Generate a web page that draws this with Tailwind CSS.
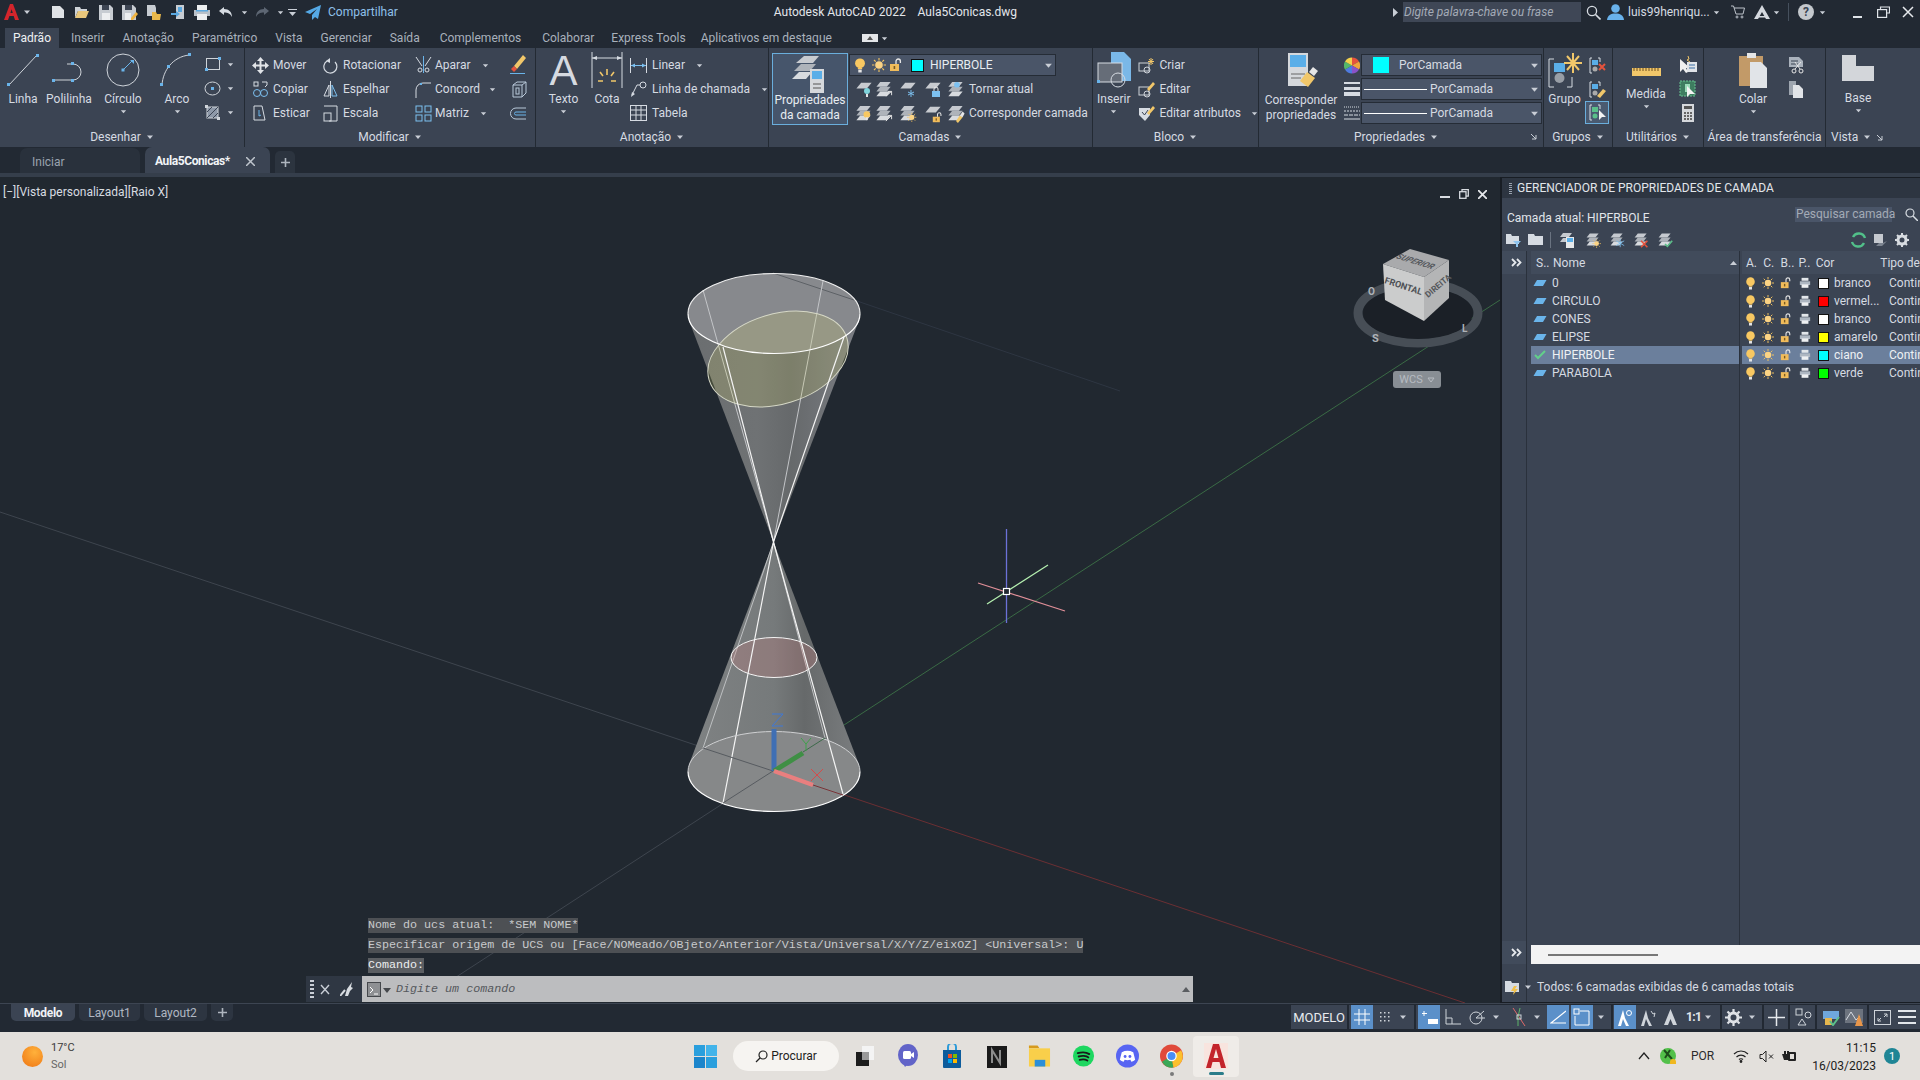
<!DOCTYPE html>
<html lang="pt-BR">
<head>
<meta charset="utf-8">
<title>Autodesk AutoCAD 2022</title>
<script src="https://cdn.jsdelivr.net/npm/@tailwindcss/browser@4"></script>
</head>
<body class="bg-[#222933]">
<svg class="absolute w-0 h-0">
  <defs>
    <symbol id="bulb" viewBox="1 0 10 14"><circle cx="6" cy="5" r="4.600" fill="#f8c862"/><rect x="4" y="9" width="4" height="1.400" fill="#f8c862"/><rect x="4.400" y="10.800" width="3.200" height="2.700" fill="#e6e6e6"/></symbol>
    <symbol id="sun" viewBox="0 0 14 14"><circle cx="7" cy="7" r="3.800" fill="#fbd384"/><path d="M7 0v2.400M7 11.600V14M0 7h2.400M11.600 7H14M2 2l1.700 1.700M10.300 10.300 12 12M2 12l1.700-1.700M10.300 3.700 12 2" stroke="#f5c45e" stroke-width="1.100"/></symbol>
    <symbol id="lock" viewBox="0 0 14 14"><rect x="1" y="6" width="9" height="7" fill="#f1bc5b"/><rect x="4.600" y="8" width="1.600" height="3" fill="#7a5a20"/><path d="M7 6V3.200a2.200 2.200 0 0 1 4.400 0V5" stroke="#e6e6e6" stroke-width="1.300" fill="none"/></symbol>
    <symbol id="printer" viewBox="0 0 14 14"><rect x="3" y="1" width="8" height="3.400" fill="#e2e6ea"/><rect x="1" y="5" width="12" height="4.400" fill="#aeb7c2"/><rect x="3" y="8.600" width="8" height="4" fill="#eef0f2"/></symbol>
    <symbol id="plane" viewBox="0 0 14 8"><path d="M4 1h9.500L10 7H.5z" fill="#6ab4ea"/></symbol>
    <symbol id="stack" viewBox="0 0 20 20"><path d="M6 2h11l-4 5H2z" fill="#c5c9cf"/><path d="M6 7h11l-4 5H2z" fill="#aeb3ba"/><path d="M6 12h11l-4 5H2z" fill="#d8dbdf"/></symbol>
    <symbol id="plate" viewBox="0 0 20 20"><path d="M7 3h11l-5 6H2z" fill="#c8cbd0"/></symbol>
    <symbol id="chev" viewBox="0 0 8 8"><path d="M1 2.500h6L4 6z" fill="#c9ced6"/></symbol>
  </defs>
</svg>

<div class="flex flex-col w-[1920px] h-[1080px] overflow-hidden whitespace-nowrap text-[12px] leading-none text-[#d6dbe2] font-['Roboto',sans-serif]">

  <!-- title bar -->
  <header class="flex items-center h-6 shrink-0 bg-[#222933]">
    <div class="flex items-center w-[46px] pl-[4px] gap-[4px]">
      <svg width="15" height="18" viewBox="0 0 15 18"><path d="M0 17 6 1h3l6 16h-4L9.700 13H5.400L4 17zM6.400 10h2.400L7.600 6.200z" fill="#d3252c"/></svg>
      <svg width="8" height="8"><use href="#chev"/></svg>
    </div>
    <span class="flex justify-center w-6"><svg width="14" height="14" viewBox="0 0 14 14"><path d="M1 1h8l4 4v8H1z" fill="#dfe2e6"/></svg></span>
    <span class="flex justify-center w-6"><svg width="16" height="14" viewBox="0 0 16 14"><path d="M1 2h5l1 2h6v2H4L1 13z" fill="#cfd3d8"/><path d="M4 6h11l-3 7H1z" fill="#e9c77c"/></svg></span>
    <span class="flex justify-center w-6"><svg width="14" height="15" viewBox="0 0 14 15"><path d="M0 0h11l3 3v12H0z" fill="#c7ccd2"/><rect x="3" y="0" width="7" height="5" fill="#3c4452"/><rect x="3" y="8" width="8" height="7" fill="#eceef0"/></svg></span>
    <span class="flex justify-center w-6"><svg width="16" height="15" viewBox="0 0 16 15"><path d="M0 0h11l3 3v12H0z" fill="#c7ccd2"/><rect x="3" y="0" width="7" height="5" fill="#3c4452"/><rect x="3" y="8" width="6" height="7" fill="#eceef0"/><path d="m9 13 5-6 2 2-5 6H9z" fill="#f0b340"/></svg></span>
    <span class="flex justify-center w-6"><svg width="16" height="15" viewBox="0 0 16 15"><path d="M1 0h8l1 3v8H1z" fill="#c7ccd2"/><path d="M6 7h4l1 2h4l-1 6H6z" fill="#e9b84c"/></svg></span>
    <span class="flex justify-center w-6"><svg width="14" height="16" viewBox="0 0 14 16"><rect x="5" y="1" width="8" height="14" fill="#c7ccd2"/><rect x="7" y="3" width="4" height="5" fill="#5aa7df"/><path d="M0 9h5V7l4 3-4 3v-2H0z" fill="#5aa7df"/></svg></span>
    <span class="flex justify-center w-6"><svg width="16" height="15" viewBox="0 0 16 15"><rect x="3" y="0" width="10" height="5" fill="#eceef0"/><rect x="0" y="5" width="16" height="6" fill="#b9c0c8"/><rect x="3" y="9" width="10" height="6" fill="#eceef0"/><rect x="2" y="5" width="12" height="1.500" fill="#5aa7df"/></svg></span>
    <span class="flex justify-center w-6"><svg width="16" height="12" viewBox="0 0 16 12"><path d="M6 1 1 5l5 4V6.500c4 0 6 1 8 4.500 0-5-3-8-8-8z" fill="#d6dbe2"/></svg></span>
    <span class="flex justify-center w-3"><svg width="7" height="7"><use href="#chev"/></svg></span>
    <span class="flex justify-center w-6"><svg width="16" height="12" viewBox="0 0 16 12"><path d="M10 1l5 4-5 4V6.500C6 6.500 4 7.500 2 11c0-5 3-8 8-8z" fill="#5d6673"/></svg></span>
    <span class="flex justify-center w-3"><svg width="7" height="7"><use href="#chev"/></svg></span>
    <span class="flex justify-center w-3"><svg width="9" height="9" viewBox="0 0 9 9"><path d="M0 1h9v1H0zM1 4h7L4.500 8z" fill="#c9ced6"/></svg></span>
    <span class="flex justify-center w-6 ml-[3px]"><svg width="16" height="15" viewBox="0 0 16 15"><path d="M16 0 0 7l5 2 7-5-5 6v5l3-3 3 2z" fill="#55a9e6"/></svg></span>
    <span class="ml-[3px] text-[#8fc0ea]">Compartilhar</span>
    <span class="ml-[376px] whitespace-pre text-[#e2e6eb]">Autodesk AutoCAD 2022    Aula5Conicas.dwg</span>

    <div class="flex items-center ml-auto h-6">
      <svg width="6" height="9" viewBox="0 0 6 9"><path d="M1 0l5 4.500L1 9z" fill="#c9ced6"/></svg>
      <div class="flex items-center ml-[5px] w-[178px] h-5 px-[1px] bg-[#3f4756] italic text-[#a4abb6]">Digite palavra-chave ou frase</div>
      <svg class="ml-[5px]" width="15" height="15" viewBox="0 0 15 15" fill="none"><circle cx="6" cy="6" r="4.600" stroke="#d8dde3" stroke-width="1.300"/><path d="m9.500 9.500 5 5" stroke="#d8dde3" stroke-width="1.600"/></svg>
      <svg class="ml-[6px]" width="17" height="16" viewBox="0 0 17 16"><circle cx="8.500" cy="4.500" r="4.300" fill="#69b2ec"/><path d="M0 16c.5-5 4-6.500 8.500-6.500S16.500 11 17 16z" fill="#69b2ec"/></svg>
      <span class="ml-[4px] w-[85px]">luis99henriqu...</span>
      <svg width="7" height="7"><use href="#chev"/></svg>
      <svg class="ml-[11px]" width="14" height="14" viewBox="0 0 14 14" fill="none" stroke="#bcc2ca"><path d="M0 1h2.500L5 9h7l1.500-6H3"/><circle cx="6" cy="12" r="1"/><circle cx="11" cy="12" r="1"/></svg>
      <svg class="ml-[9px]" width="16" height="14" viewBox="0 0 16 14"><path d="M8 0 16 14h-4L8 7l-4 7H0z" fill="#d4d8de"/><path d="M4 11h8v1.500H4z" fill="#d4d8de"/></svg>
      <svg class="ml-[3px]" width="7" height="7"><use href="#chev"/></svg>
      <span class="ml-[8px] w-px h-[18px] bg-[#46505d]"></span>
      <span class="flex items-center justify-center ml-[9px] w-4 h-4 rounded-full bg-[#c4c8cd] text-[#3b4453] font-bold text-[12px]">?</span>
      <svg class="ml-[5px]" width="7" height="7"><use href="#chev"/></svg>
      <span class="ml-[27px] w-[9px] h-[2px] mt-[9px] bg-[#dfe3e8]"></span>
      <svg class="ml-[15px]" width="13" height="12" viewBox="0 0 13 12" fill="none" stroke="#dfe3e8" stroke-width="1.200"><path d="M3.500 3V1h9v6h-3"/><rect x=".6" y="3.600" width="9" height="7.800"/></svg>
      <svg class="ml-[12px] mr-[6px]" width="12" height="12" viewBox="0 0 12 12" stroke="#e6e9ed" stroke-width="1.500"><path d="m1 1 10 10M11 1 1 11"/></svg>
    </div>
  </header>

  <!-- ribbon tabs -->
  <nav class="flex items-end h-6 shrink-0 pl-[5px] bg-[#222933] text-[#a9b1bc]">
    <span class="flex items-center justify-center w-[54px] h-5 bg-[#3b4453] text-[#eef1f4] ">Padrão</span>
    <span class="flex items-center h-5 ml-[3px] px-[9px]">Inserir</span>
    <span class="flex items-center h-5 px-[9px]">Anotação</span>
    <span class="flex items-center h-5 px-[9px]">Paramétrico</span>
    <span class="flex items-center h-5 px-[9px]">Vista</span>
    <span class="flex items-center h-5 px-[9px]">Gerenciar</span>
    <span class="flex items-center h-5 px-[9px]">Saída</span>
    <span class="flex items-center h-5 ml-[2px] px-[9px]">Complementos</span>
    <span class="flex items-center h-5 ml-[3px] px-[9px]">Colaborar</span>
    <span class="flex items-center h-5 -ml-[1px] px-[9px]">Express Tools</span>
    <span class="flex items-center h-5 -ml-[3px] px-[9px]">Aplicativos em destaque</span>
    <span class="flex items-center h-5 ml-[21px]"><span class="flex items-center justify-center w-[16px] h-[8px] bg-[#e4e6e9]"><svg width="6" height="4" viewBox="0 0 6 4"><path d="M0 4 3 0l3 4z" fill="#555"/></svg></span><svg class="ml-[3px]" width="7" height="7"><use href="#chev"/></svg></span>
  </nav>

  <!-- ribbon -->
  <section class="flex h-[99px] shrink-0 bg-[#3b4453]">

    <!-- Desenhar -->
    <div class="flex flex-col w-[245px] border-r border-[#232a33]">
      <div class="flex h-[79px] pt-[4px]">
        <div class="flex flex-col items-center w-[46px]">
          <svg width="34" height="36" viewBox="0 0 34 36" fill="none"><path d="M3 33 31 3" stroke="#cfd4da" stroke-width="1"/><rect x="1" y="31" width="3" height="3" fill="#6ab4ea"/><rect x="30" y="2" width="3" height="3" fill="#6ab4ea"/></svg>
          <span class="mt-[5px]">Linha</span>
        </div>
        <div class="flex flex-col items-center w-[46px]">
          <svg width="36" height="36" viewBox="0 0 36 36" fill="none"><path d="M2 28h20a8 8 0 0 0 0-16h-6" stroke="#cfd4da"/><rect x="1" y="27" width="3" height="3" fill="#6ab4ea"/><rect x="20" y="27" width="3" height="3" fill="#6ab4ea"/><rect x="20" y="10" width="3" height="3" fill="#6ab4ea"/></svg>
          <span class="mt-[5px]">Polilinha</span>
        </div>
        <div class="flex flex-col items-center w-[62px]">
          <svg width="36" height="36" viewBox="0 0 36 36" fill="none"><circle cx="18" cy="18" r="16" stroke="#cfd4da"/><path d="M18 18l9-9" stroke="#6ab4ea"/><rect x="16.500" y="16.500" width="3" height="3" fill="#6ab4ea"/><path d="M25 8h4v4z" fill="#6ab4ea"/></svg>
          <span class="mt-[5px]">Círculo</span>
          <svg class="mt-[3px]" width="7" height="7"><use href="#chev"/></svg>
        </div>
        <div class="flex flex-col items-center w-[46px]">
          <svg width="36" height="36" viewBox="0 0 36 36" fill="none"><path d="M3 33C4 18 14 5 30 3" stroke="#cfd4da"/><rect x="1" y="31" width="3" height="3" fill="#6ab4ea"/><rect x="8" y="13" width="3" height="3" fill="#6ab4ea"/><rect x="29" y="1" width="3" height="3" fill="#6ab4ea"/></svg>
          <span class="mt-[5px]">Arco</span>
          <svg class="mt-[3px]" width="7" height="7"><use href="#chev"/></svg>
        </div>
        <div class="flex flex-col w-[44px]">
          <div class="flex items-center h-6 pl-[4px] gap-[6px]"><svg width="17" height="15" viewBox="0 0 17 15" fill="none" stroke="#cfd4da"><rect x="2.500" y="1.500" width="13" height="11"/><rect x="1" y="11" width="3" height="3" fill="#6ab4ea" stroke="none"/><rect x="14" y="0" width="3" height="3" fill="#6ab4ea" stroke="none"/></svg><svg width="7" height="7"><use href="#chev"/></svg></div>
          <div class="flex items-center h-6 pl-[4px] gap-[6px]"><svg width="17" height="15" viewBox="0 0 17 15" fill="none"><ellipse cx="8.500" cy="7.500" rx="7.500" ry="6.500" stroke="#cfd4da"/><rect x="7" y="6" width="3" height="3" fill="#6ab4ea"/></svg><svg width="7" height="7"><use href="#chev"/></svg></div>
          <div class="flex items-center h-6 pl-[4px] gap-[6px]"><svg width="17" height="17" viewBox="0 0 17 17" fill="none"><rect x="3" y="3" width="11" height="11" fill="#8d98a8" stroke="#cfd4da"/><path d="M3 8 8 3M3 14 14 3M9 14l5-5" stroke="#3b4453"/><rect x="1" y="1" width="3" height="3" fill="#cfd4da"/><rect x="13" y="13" width="3" height="3" fill="#cfd4da"/></svg><svg width="7" height="7"><use href="#chev"/></svg></div>
        </div>
      </div>
      <div class="flex items-center justify-center gap-[5px] h-5">Desenhar <svg width="8" height="8"><use href="#chev"/></svg></div>
    </div>

    <!-- Modificar -->
    <div class="flex flex-col w-[291px] border-r border-[#232a33]">
      <div class="flex h-[79px] pt-[5px] pl-[7px]">
        <div class="flex flex-col w-[71px]">
          <div class="flex items-center h-6 gap-[4px]"><svg width="17" height="17" viewBox="0 0 17 17"><path d="M8.500 0 12 4H9.500v3.500H13V5l4 3.500L13 12V9.500H9.500V13H12l-3.500 4L5 13h2.500V9.500H4V12L0 8.500 4 5v2.500h3.500V4H5z" fill="#e1e4e8"/></svg>Mover</div>
          <div class="flex items-center h-6 gap-[4px]"><svg width="17" height="17" viewBox="0 0 17 17" fill="none" stroke="#7cc0f0"><rect x="2" y="1" width="4" height="4" stroke="#d6dbe2"/><path d="M10 1h5v3l-2 2" stroke="#d6dbe2"/><circle cx="5" cy="12" r="3.500"/><circle cx="12" cy="12" r="3.500"/></svg>Copiar</div>
          <div class="flex items-center h-6 gap-[4px]"><svg width="17" height="17" viewBox="0 0 17 17" fill="none" stroke="#d6dbe2"><path d="M2 1h8l3 14H2z"/><path d="M7 5v6l2-1" stroke="#6ab4ea"/></svg>Esticar</div>
        </div>
        <div class="flex flex-col w-[92px]">
          <div class="flex items-center h-6 gap-[5px]"><svg width="15" height="17" viewBox="0 0 15 17" fill="none" stroke="#d6dbe2" stroke-width="1.200"><path d="M12 5a6.500 6.500 0 1 1-8-1"/><path d="M7 1v5L3 4z" fill="#d6dbe2" stroke="none"/></svg>Rotacionar</div>
          <div class="flex items-center h-6 gap-[5px]"><svg width="15" height="17" viewBox="0 0 15 17" fill="none" stroke="#d6dbe2"><path d="M7.500 0v17"/><path d="M6 4 1 15h5z" /><path d="M9 4l5 11H9z" stroke="#7cc0f0"/></svg>Espelhar</div>
          <div class="flex items-center h-6 gap-[5px]"><svg width="15" height="17" viewBox="0 0 15 17" fill="none" stroke="#d6dbe2"><path d="M1 1h13v15H6"/><rect x="1" y="8" width="7" height="8"/></svg>Escala</div>
        </div>
        <div class="flex flex-col w-[94px]">
          <div class="flex items-center h-6 gap-[3px]"><svg width="17" height="18" viewBox="0 0 17 18" fill="none" stroke="#d6dbe2"><path d="M8.500 0v17" stroke="#6ab4ea"/><path d="M1 1l6 9M16 1l-6 9"/><circle cx="5" cy="14" r="2"/><circle cx="12" cy="14" r="2"/></svg>Aparar<svg class="ml-[8px]" width="7" height="7"><use href="#chev"/></svg></div>
          <div class="flex items-center h-6 gap-[3px]"><svg width="17" height="17" viewBox="0 0 17 17" fill="none" stroke="#d6dbe2"><path d="M1 17V9a7 7 0 0 1 7-7h8"/><rect x="5" y="2" width="2" height="2" fill="#6ab4ea" stroke="none"/></svg>Concord<svg class="ml-[6px]" width="7" height="7"><use href="#chev"/></svg></div>
          <div class="flex items-center h-6 gap-[3px]"><svg width="17" height="17" viewBox="0 0 17 17" fill="none" stroke="#7cc0f0"><rect x="1" y="1" width="6" height="6"/><rect x="10" y="1" width="6" height="6"/><rect x="1" y="10" width="6" height="6"/><rect x="10" y="10" width="6" height="6"/></svg>Matriz<svg class="ml-[8px]" width="7" height="7"><use href="#chev"/></svg></div>
        </div>
        <div class="flex flex-col w-[18px]">
          <div class="flex items-center h-6"><svg width="18" height="20" viewBox="0 0 18 20"><path d="m5 11 9-11 3 3-9 11z" fill="#f1c76a"/><path d="m2 14 3-3 3 3-3 3z" fill="#e5533d"/><path d="M1 18h15v1H1z" fill="#6ab4ea"/></svg></div>
          <div class="flex items-center h-6"><svg width="18" height="17" viewBox="0 0 18 17" fill="none" stroke="#b9c9da"><path d="M4 4 8 1h9v11l-4 4H4z"/><path d="M4 4h9v12M13 4l4-3"/><rect x="7" y="7" width="3" height="6"/></svg></div>
          <div class="flex items-center h-6"><svg width="18" height="15" viewBox="0 0 18 15" fill="none" stroke="#b9c9da"><path d="M17 2H7a5.500 5.500 0 0 0 0 11h10"/><path d="M17 6H7a1.500 1.500 0 0 0 0 3h10" stroke="#6ab4ea"/></svg></div>
        </div>
      </div>
      <div class="flex items-center justify-center gap-[5px] h-5">Modificar <svg width="8" height="8"><use href="#chev"/></svg></div>
    </div>

    <!-- Anotação -->
    <div class="flex flex-col w-[233px] border-r border-[#232a33]">
      <div class="flex h-[79px] pt-[4px]">
        <div class="flex flex-col items-center w-[56px]">
          <span class="h-[36px] text-[42px] leading-[38px] text-[#d6dae0] font-['Liberation_Sans',sans-serif]">A</span>
          <span class="mt-[5px]">Texto</span>
          <svg class="mt-[3px]" width="7" height="7"><use href="#chev"/></svg>
        </div>
        <div class="flex flex-col items-center w-[32px]">
          <svg width="32" height="36" viewBox="0 0 32 36" fill="none"><path d="M1 0v36M31 0v36" stroke="#d6dbe2"/><path d="M1 6h30" stroke="#d6dbe2"/><path d="M1 6l5-2v4zM31 6l-5-2v4z" fill="#d6dbe2"/><path d="M16 17v6M9 20l3 4M23 20l-3 4M7 29h5M20 29h5" stroke="#f1c76a" stroke-width="1.600"/></svg>
          <span class="mt-[5px]">Cota</span>
        </div>
        <div class="flex flex-col ml-[7px] pt-[1px]">
          <div class="flex items-center h-6 gap-[5px]"><svg width="17" height="17" viewBox="0 0 17 17" fill="none" stroke="#d6dbe2"><path d="M.5 1v15M16.500 1v15"/><path d="M1 8.500h15" stroke="#7cc0f0"/><path d="M1 8.500l4-2v4zM16 8.500l-4-2v4z" fill="#7cc0f0" stroke="none"/></svg>Linear<svg class="ml-[6px]" width="7" height="7"><use href="#chev"/></svg></div>
          <div class="flex items-center h-6 gap-[5px]"><svg width="17" height="17" viewBox="0 0 17 17" fill="none" stroke="#d6dbe2"><circle cx="13" cy="4" r="3"/><path d="M10 4H7L2 14"/><path d="m1 16 1-5 3 2z" fill="#d6dbe2" stroke="none"/></svg>Linha de chamada<svg class="ml-[6px]" width="7" height="7"><use href="#chev"/></svg></div>
          <div class="flex items-center h-6 gap-[5px]"><svg width="17" height="16" viewBox="0 0 17 16" fill="none" stroke="#d6dbe2"><rect x=".5" y=".5" width="16" height="15"/><path d="M.5 5h16M.5 10h16M6 .5v15M11 .5v15"/></svg>Tabela</div>
        </div>
      </div>
      <div class="flex items-center justify-center gap-[5px] h-5">Anotação <svg width="8" height="8"><use href="#chev"/></svg></div>
    </div>

    <!-- Camadas -->
    <div class="flex flex-col w-[324px] border-r border-[#232a33]">
      <div class="flex h-[79px] pt-[5px] pl-[3px]">
        <div class="flex flex-col items-center w-[76px] h-[72px] border border-[#6aaedc] bg-[#46556b] pt-[1px]">
          <svg width="44" height="38" viewBox="0 0 44 38"><path d="M16 1h15l-6 7H8z" fill="#c8cbd0"/><path d="M13 9h15l-6 7H6z" fill="#aeb3ba"/><path d="M11 17h13l-6 7H4z" fill="#d8dbdf"/><rect x="22" y="14" width="14" height="24" fill="#d5d8dc"/><rect x="24" y="16" width="10" height="8" fill="#5aaee8"/><path d="M25 29h8M25 33h8" stroke="#555"/></svg>
          <span class="leading-[15px] text-center text-[#e8edf2]">Propriedades<br>da camada</span>
        </div>
        <div class="flex flex-col ml-[1px] w-[240px]">
          <div class="flex items-center w-[207px] h-[22px] mt-px border border-[#252c36] bg-[#4a5568] pl-[4px]">
            <svg width="12" height="15"><use href="#bulb"/></svg>
            <svg class="ml-[6px]" width="14" height="14"><use href="#sun"/></svg>
            <svg class="ml-[3px]" width="14" height="14"><use href="#lock"/></svg>
            <span class="ml-[8px] shrink-0 w-[13px] h-[13px] bg-[#00ffff] border border-[#111]"></span>
            <span class="ml-[6px] text-[#e8edf2]">HIPERBOLE</span>
            <svg class="ml-auto mr-[2px]" width="9" height="9"><use href="#chev"/></svg>
          </div>
          <div class="flex items-center h-6 mt-px pl-[5px]">
            <svg width="20" height="19" viewBox="0 0 20 19"><use href="#plate"/><circle cx="13" cy="11" r="3" fill="#7fd4dc"/><rect x="12" y="14" width="2" height="3" fill="#e6e6e6"/></svg>
            <svg width="20" height="19" viewBox="0 0 20 20"><use href="#stack"/><path d="m12 17 6-5M18 12v4M18 12h-4" stroke="#e6e6e6"/></svg>
            <svg class="ml-[4px]" width="20" height="19" viewBox="0 0 20 19"><use href="#plate"/><path d="M13 10v7M10 12l6 3M10 15l6-3" stroke="#7cc0f0"/></svg>
            <svg class="ml-[5px]" width="20" height="19" viewBox="0 0 20 19"><use href="#plate"/><rect x="9" y="11" width="8" height="6" fill="#7cc0f0"/><path d="M11 11V9a2 2 0 0 1 4 0v2" stroke="#e6e6e6" fill="none"/></svg>
            <svg class="ml-[3px]" width="20" height="19" viewBox="0 0 20 20"><use href="#stack"/><circle cx="11" cy="5" r="3" fill="#7cc0f0"/></svg>
            <span class="ml-[3px]">Tornar atual</span>
          </div>
          <div class="flex items-center h-6 pl-[5px]">
            <svg width="20" height="19" viewBox="0 0 20 20"><use href="#stack"/><circle cx="13" cy="11" r="3.500" fill="#f8c862"/><rect x="12" y="14" width="2" height="3" fill="#e6e6e6"/></svg>
            <svg width="20" height="19" viewBox="0 0 20 20"><use href="#stack"/><path d="m12 18 6-6M18 12v4M18 12h-4" stroke="#e6e6e6"/></svg>
            <svg class="ml-[4px]" width="20" height="19" viewBox="0 0 20 20"><use href="#stack"/><use href="#sun" x="9" y="9" width="10" height="10"/></svg>
            <svg class="ml-[5px]" width="20" height="19" viewBox="0 0 20 19"><use href="#plate"/><use href="#lock" x="9" y="8" width="11" height="11"/></svg>
            <svg class="ml-[3px]" width="20" height="19" viewBox="0 0 20 20"><use href="#stack"/><path d="m10 18 4-6 3 2-5 6z" fill="#f1c76a"/><path d="m14 12 3-4 2 2-2 4z" fill="#e6e6e6"/></svg>
            <span class="ml-[3px]">Corresponder camada</span>
          </div>
        </div>
      </div>
      <div class="flex items-center justify-center gap-[5px] h-5">Camadas <svg width="8" height="8"><use href="#chev"/></svg></div>
    </div>

    <!-- Bloco -->
    <div class="flex flex-col w-[166px] border-r border-[#232a33]">
      <div class="flex h-[79px] pt-[4px]">
        <div class="flex flex-col items-center w-[44px]">
          <svg width="34" height="36" viewBox="0 0 34 36"><path d="M14 0h13l7 7v22H14z" fill="#7ab8e8"/><rect x="1" y="11" width="24" height="19" fill="#666d78" stroke="#d6dbe2"/><circle cx="21" cy="28" r="7" fill="none" stroke="#d6dbe2"/><rect x="0" y="28" width="3" height="3" fill="#6ab4ea"/></svg>
          <span class="mt-[5px]">Inserir</span>
          <svg class="mt-[3px]" width="7" height="7"><use href="#chev"/></svg>
        </div>
        <div class="flex flex-col pt-[1px] pl-[4px]">
          <div class="flex items-center h-6 gap-[4px]"><svg width="17" height="17" viewBox="0 0 17 17" fill="none" stroke="#cfd4da"><rect x="1" y="6" width="10" height="8"/><circle cx="9" cy="13" r="3"/><path d="M13 1v7M10 4.500h6M11 2l4 5M15 2l-4 5" stroke="#f1c76a"/></svg>Criar</div>
          <div class="flex items-center h-6 gap-[4px]"><svg width="17" height="17" viewBox="0 0 17 17" fill="none" stroke="#cfd4da"><rect x="1" y="6" width="10" height="8"/><circle cx="9" cy="13" r="3"/><path d="m9 8 6-7 2 2-6 7z" fill="#f1c76a" stroke="none"/></svg>Editar</div>
          <div class="flex items-center h-6 gap-[4px]"><svg width="17" height="17" viewBox="0 0 17 17"><path d="M1 3h11v7l-5 6-6-6z" fill="#d6dbe2"/><path d="M4 7l2.500 3L10 5" stroke="#3b4453" fill="none"/><path d="m9 8 6-7 2 2-6 7z" fill="#f1c76a"/></svg>Editar atributos<svg class="ml-[6px]" width="7" height="7"><use href="#chev"/></svg></div>
        </div>
      </div>
      <div class="flex items-center justify-center gap-[5px] h-5">Bloco <svg width="8" height="8"><use href="#chev"/></svg></div>
    </div>

    <!-- Propriedades -->
    <div class="flex flex-col w-[285px] border-r border-[#232a33]">
      <div class="flex h-[79px] pt-[5px]">
        <div class="flex flex-col items-center w-[84px] -mt-[1px]">
          <svg width="36" height="36" viewBox="0 0 36 36"><rect x="5" y="1" width="20" height="33" fill="#d5d8dc"/><rect x="7" y="3" width="16" height="12" fill="#5aaee8"/><path d="M8 22h14M8 26h10" stroke="#666"/><path d="m17 29 7-9 8 6-7 9z" fill="#f1c76a"/><path d="m26 20 4-5 5 4-4 5z" fill="#e6e6e6"/></svg>
          <span class="mt-[5px] leading-[15px] text-center">Corresponder<br>propriedades</span>
        </div>
        <div class="flex flex-col">
          <div class="flex items-center h-6"><svg class="ml-[1px]" width="16" height="17" viewBox="0 0 16 16"><path d="M8 8V0a8 8 0 0 1 7 4z" fill="#e5533d"/><path d="M8 8l7-4a8 8 0 0 1 0 8z" fill="#f1a33c"/><path d="m8 8 7 4a8 8 0 0 1-7 4z" fill="#8a53c9"/><path d="M8 8v8a8 8 0 0 1-7-4z" fill="#4f7be0"/><path d="M8 8 1 12a8 8 0 0 1 0-8z" fill="#55b86a"/><path d="M8 8 1 4a8 8 0 0 1 7-4z" fill="#f4d24b"/></svg>
            <div class="flex items-center ml-[1px] w-[181px] h-[22px] border border-[#252c36] bg-[#4a5568] pl-[11px]"><span class="shrink-0 w-4 h-4 bg-[#00ffff]"></span><span class="ml-[10px]">PorCamada</span><svg class="ml-auto mr-[2px]" width="9" height="9"><use href="#chev"/></svg></div>
          </div>
          <div class="flex items-center h-6"><svg class="ml-[1px]" width="16" height="16" viewBox="0 0 16 16"><path d="M0 1h16v2H0zM0 6h16v3H0zM0 11h16v4H0z" fill="#d6dbe2"/></svg>
            <div class="flex items-center ml-[1px] w-[181px] h-[22px] border border-[#252c36] bg-[#4a5568]"><span class="ml-[2px] w-[63px] h-px bg-white"></span><span class="ml-[3px]">PorCamada</span><svg class="ml-auto mr-[2px]" width="9" height="9"><use href="#chev"/></svg></div>
          </div>
          <div class="flex items-center h-6"><svg class="ml-[1px]" width="16" height="16" viewBox="0 0 16 16" stroke="#d6dbe2" fill="none"><path d="M0 2h16" stroke-dasharray="1 1"/><path d="M0 6h16" stroke-dasharray="2 1"/><path d="M0 10h16" stroke-dasharray="4 1"/><path d="M0 14h16"/></svg>
            <div class="flex items-center ml-[1px] w-[181px] h-[22px] border border-[#252c36] bg-[#4a5568]"><span class="ml-[2px] w-[63px] h-px bg-white"></span><span class="ml-[3px]">PorCamada</span><svg class="ml-auto mr-[2px]" width="9" height="9"><use href="#chev"/></svg></div>
          </div>
        </div>
      </div>
      <div class="relative flex items-center justify-center gap-[5px] h-5 pr-[10px]">Propriedades <svg width="8" height="8"><use href="#chev"/></svg><svg class="absolute right-[6px] top-[6px]" width="7" height="7" viewBox="0 0 7 7" stroke="#c9ced6" fill="none"><path d="M1 1l5 5M6 2v4H2"/></svg></div>
    </div>

    <!-- Grupos -->
    <div class="flex flex-col w-[69px] border-r border-[#232a33]">
      <div class="flex h-[79px] pt-[4px]">
        <div class="flex flex-col items-center w-[41px]">
          <svg width="34" height="36" viewBox="0 0 34 36" fill="none"><path d="M6 7H1v28h5M19 35h5V25" stroke="#d6dbe2"/><rect x="6" y="11" width="11" height="9" fill="#5aaee8"/><circle cx="11.500" cy="26" r="5" fill="#989ea6"/><path d="M25 1v20M16 11h18M19 4l12 14M31 4 19 18" stroke="#f1c76a" stroke-width="2"/></svg>
          <span class="mt-[5px]">Grupo</span>
        </div>
        <div class="flex flex-col pt-px">
          <div class="flex items-center h-6 ml-[4px]"><svg width="17" height="17" viewBox="0 0 17 17" fill="none"><path d="M3 1H1v15h2M9 1h2v4" stroke="#d6dbe2"/><rect x="3" y="3" width="6" height="5" fill="#5aaee8"/><circle cx="6" cy="12" r="2.500" fill="#aaa"/><path d="m10 7 6 6M16 7l-6 6" stroke="#e5533d" stroke-width="2"/></svg></div>
          <div class="flex items-center h-6 ml-[4px]"><svg width="17" height="17" viewBox="0 0 17 17" fill="none"><path d="M3 1H1v15h2M9 1h2v4" stroke="#d6dbe2"/><rect x="3" y="3" width="6" height="5" fill="#5aaee8"/><circle cx="6" cy="12" r="2.500" fill="#aaa"/><path d="m8 15 6-7 3 2-6 7z" fill="#f1c76a"/></svg></div>
          <div class="flex items-center justify-center w-6 h-[23px] border border-[#6aaedc] bg-[#4a5a70]"><svg width="17" height="17" viewBox="0 0 17 17" fill="none"><path d="M3 1H1v15h2M9 1h2v4" stroke="#d6dbe2"/><rect x="3" y="3" width="6" height="5" fill="#5ac08a"/><circle cx="6" cy="12" r="2.500" fill="#5ac08a"/><path d="M10 6v10l3-3h4z" fill="#f3f3f3"/></svg></div>
        </div>
      </div>
      <div class="flex items-center justify-center gap-[5px] h-5">Grupos <svg width="8" height="8"><use href="#chev"/></svg></div>
    </div>

    <!-- Utilitários -->
    <div class="flex flex-col w-[91px] border-r border-[#232a33]">
      <div class="flex h-[79px] pt-[4px]">
        <div class="flex flex-col items-center w-[66px]">
          <svg class="mt-[15px] mb-[12px]" width="29" height="9" viewBox="0 0 29 9"><rect width="29" height="8" y="1" fill="#f1c76a"/><path d="M2 1v3M5 1v3M8 1v3M11 1v3M14 1v3M17 1v3M20 1v3M23 1v3M26 1v3" stroke="#70501c"/></svg>
          <span>Medida</span>
          <svg class="mt-[3px]" width="7" height="7"><use href="#chev"/></svg>
        </div>
        <div class="flex flex-col pt-px">
          <div class="flex items-center h-6"><svg width="18" height="18" viewBox="0 0 18 18"><path d="M1 3v13l3-3 3 4 2-1-2-4h4z" fill="#f0f0f0"/><rect x="8" y="6" width="10" height="10" fill="#e1e4e8"/><path d="M10 9h6M10 12h6" stroke="#3a6ea5"/><path d="m9 0 1 3-2 1 3 2" stroke="#f1c76a" fill="none"/></svg></div>
          <div class="flex items-center h-6"><svg width="18" height="18" viewBox="0 0 18 18"><rect x="1" y="1" width="15" height="15" fill="#3e7d60" stroke="#68c392" stroke-dasharray="2 1"/><rect x="6" y="4" width="5" height="8" fill="#9adab8"/><path d="M8 6v11l3-3h5z" fill="#f3f3f3"/></svg></div>
          <div class="flex items-center h-6"><svg width="18" height="18" viewBox="0 0 18 18"><rect x="3" y="0" width="12" height="18" fill="#d5d8dc"/><rect x="5" y="2" width="8" height="3" fill="#555"/><path d="M5 8h2v2H5zM8 8h2v2H8zM11 8h2v2h-2zM5 11h2v2H5zM8 11h2v2H8zM11 11h2v2h-2zM5 14h2v2H5zM8 14h2v2H8zM11 14h2v2h-2z" fill="#666"/></svg></div>
        </div>
      </div>
      <div class="flex items-center justify-center gap-[5px] h-5">Utilitários <svg width="8" height="8"><use href="#chev"/></svg></div>
    </div>

    <!-- Área de transferência -->
    <div class="flex flex-col w-[122px] border-r border-[#232a33]">
      <div class="flex h-[79px] pt-[4px]">
        <div class="flex flex-col items-center w-[98px]">
          <svg width="28" height="36" viewBox="0 0 28 36"><rect x="0" y="4" width="24" height="30" fill="#c29a68"/><rect x="8" y="1" width="9" height="5" fill="#e6e6e6"/><path d="M11 10h11l6 6v20H11z" fill="#e1e4e8"/></svg>
          <span class="mt-[5px]">Colar</span>
          <svg class="mt-[3px]" width="7" height="7"><use href="#chev"/></svg>
        </div>
        <div class="flex flex-col pt-px -ml-[14px]">
          <div class="flex items-center h-6"><svg width="18" height="18" viewBox="0 0 18 18"><path d="M1 1h10l4 4v6H1z" fill="#aab2bc"/><path d="M3 5h7M3 8h7" stroke="#3b4453"/><circle cx="6" cy="15" r="2" fill="none" stroke="#e6e6e6"/><circle cx="13" cy="15" r="2" fill="none" stroke="#e6e6e6"/><path d="m7 13 6-7M12 13 7 6" stroke="#e6e6e6"/></svg></div>
          <div class="flex items-center h-6"><svg width="16" height="18" viewBox="0 0 16 18"><path d="M1 1h7v4h3v10H1z" fill="#9ea6b0"/><path d="M5 5h6l4 4v9H5z" fill="#e1e4e8"/></svg></div>
        </div>
      </div>
      <div class="flex items-center justify-center h-5">Área de transferência</div>
    </div>

    <!-- Vista -->
    <div class="flex flex-col flex-1">
      <div class="flex h-[79px] pt-[7px]">
        <div class="flex flex-col items-center w-[64px]">
          <svg class="mb-[8px]" width="32" height="26" viewBox="0 0 32 26"><path d="M0 0h14v11h18v15H0z" fill="#d3d6da"/></svg>
          <span class="mt-[3px]">Base</span>
          <svg class="mt-[3px]" width="7" height="7"><use href="#chev"/></svg>
        </div>
      </div>
      <div class="flex items-center h-5 pl-[5px] gap-[5px]">Vista <svg width="8" height="8"><use href="#chev"/></svg><svg width="7" height="7" viewBox="0 0 7 7" stroke="#c9ced6" fill="none"><path d="M1 1l5 5M6 2v4H2"/></svg></div>
    </div>
  </section>

  <!-- document tabs -->
  <div class="flex items-end h-[26px] shrink-0 pl-[20px] bg-[#222933]">
    <div class="flex items-center w-[120px] h-[25px] pt-[2px] pl-[12px] rounded-t-[7px] bg-[#29313c] text-[#9aa3af]">Iniciar</div>
    <div class="flex items-center w-[125px] h-[26px] pt-[2px] ml-[5px] pl-[10px] rounded-t-[7px] bg-[#3b4453] text-[#f2f4f7] font-bold tracking-[-0.4px]">Aula5Conicas*<svg class="ml-[16px]" width="9" height="9" viewBox="0 0 9 9" stroke="#bfc5cd" stroke-width="1.500"><path d="m0 0 9 9M9 0 0 9"/></svg></div>
    <div class="flex items-center justify-center w-5 h-[22px] ml-[5px] rounded-t-[5px] bg-[#2c343f]"><svg width="9" height="9" viewBox="0 0 9 9" stroke="#aeb5be" stroke-width="1.600"><path d="M4.500 0v9M0 4.500h9"/></svg></div>
  </div>
  <div class="h-[4px] shrink-0 bg-[#353e4b]"></div>

  <!-- workspace -->
  <main class="flex h-[826px] shrink-0 bg-[#181d24]">

    <!-- drawing area: shapes sit at their place on the canvas -->
    <div class="relative w-[1500px] bg-[#212830]">
      <svg class="absolute inset-0" width="1500" height="826" viewBox="0 177 1500 826" fill="none">
        <defs>
          <linearGradient id="upper" x1="0" x2="1" y1="0" y2="0"><stop offset="0" stop-color="#6b6e70"/><stop offset=".4" stop-color="#6f7274"/><stop offset=".6" stop-color="#66696b"/><stop offset="1" stop-color="#7b7e84"/></linearGradient>
          <linearGradient id="lower" x1="0" x2="1" y1="0" y2="0"><stop offset="0" stop-color="#7f8283"/><stop offset=".5" stop-color="#767a7b"/><stop offset=".68" stop-color="#66696a"/><stop offset="1" stop-color="#7b7e80"/></linearGradient>
        </defs>
        <!-- axes and guides -->
        <path d="M0 512 773 771" stroke="#3e454e"/>
        <path d="M773 771 450 981" stroke="#3e454e"/>
        <path d="M773 771 1500 300" stroke="#3a6b45"/>
        <path d="M773 771 1465 1003" stroke="#6b2f33"/>
        <!-- upper cone -->
        <path d="M689 320.500 773.500 542 859 320.500Z" fill="url(#upper)"/>
        <ellipse cx="774" cy="313.500" rx="86" ry="40" fill="#87898d"/>
        <path d="M773 273 857 301" stroke="#5d6166"/>
        <path d="M857 301 1120 391" stroke="#2e3642"/>
        <path d="M703 290 773.500 542M823 281 773.500 542" stroke="#c3c5c8"/>
        <ellipse cx="778" cy="359" rx="72" ry="45" transform="rotate(-17 778 359)" fill="#d8d86a" fill-opacity=".2" stroke="#d6d8c6"/>
        <path d="M723 347 773.500 542M844 337 773.500 542" stroke="#f4f4f4" stroke-width="1.200"/>
        <path d="M688 313.500a86 40 0 0 0 172 0" stroke="#fff" stroke-width="1.200"/>
        <path d="M688 313.500a86 40 0 0 1 172 0" stroke="#f0f0f0" stroke-width="1.200"/>
        <!-- lower cone -->
        <path d="M689 764.500 773.500 542 859 764.500Z" fill="url(#lower)"/>
        <ellipse cx="774" cy="771.500" rx="86" ry="40" fill="#868889"/>
        <path d="M703 748 773.500 542M825 738 773.500 542" stroke="#bec0c2"/>
        <ellipse cx="774" cy="657.500" rx="43" ry="20" fill="#e08080" fill-opacity=".22" stroke="#f4f4f4"/>
        <path d="M723 803 773.500 542M843 794 773.500 542" stroke="#f4f4f4" stroke-width="1.200"/>
        <path d="M688 771.500a86 40 0 0 1 172 0" stroke="#cfd0d2"/>
        <path d="M688 771.500a86 40 0 0 0 172 0" stroke="#fff" stroke-width="1.200"/>
        <path d="M703 748 773 771M773 771 723 803" stroke="#575b60"/>
        <path d="M813 785 843 795" stroke="#7a3438"/>
        <path d="M803 752 825 738" stroke="#3d6a4a"/>
        <!-- UCS icon -->
        <path d="M774 771V729" stroke="#3f6fb4" stroke-width="5"/>
        <path d="M774 771 803 753" stroke="#3f8f45" stroke-width="5"/>
        <path d="M774 771 813 785" stroke="#e97f7f" stroke-width="4"/>
        <path d="M772 714h11l-11 12h11" stroke="#3f78d6"/>
        <path d="m801 738 5 6 5-6M806 744v7" stroke="#3fa14a"/>
        <path d="m811 769 12 12M823 769l-12 12" stroke="#d64a4a"/>
        <!-- crosshair -->
        <path d="M1006.500 529V623" stroke="#6c71d8" stroke-width="1.300"/>
        <path d="M987 604 1048 565" stroke="#b5f0b0" stroke-width="1.200"/>
        <path d="M978 583 1065 611" stroke="#e08f98" stroke-width="1.200"/>
        <rect x="1003.500" y="588.500" width="6" height="6" fill="#212830" stroke="#fff" stroke-width="1.200"/>
        <!-- view cube -->
        <ellipse cx="1418" cy="313" rx="60" ry="30" stroke="#474e56" stroke-width="9"/>
        <ellipse cx="1418" cy="313" rx="55" ry="26" fill="#1b2027"/>
        <path d="M1410 249 1449 260 1424 277 1383 264Z" fill="#a9aaac"/>
        <path d="M1383 264 1424 277V321L1385 300Z" fill="#cbcccc"/>
        <path d="M1424 277 1449 260V298L1424 321Z" fill="#b4b5b6"/>
        <text transform="translate(1395 258) rotate(17) skewX(-35)" font-family="Roboto" font-size="8" font-weight="700" fill="#55585c">SUPERIOR</text>
        <text transform="translate(1384 283) rotate(18)" font-family="Roboto" font-size="9" font-weight="700" fill="#4e5155">FRONTAL</text>
        <text transform="translate(1428 298) rotate(-40)" font-family="Roboto" font-size="8.500" font-weight="700" fill="#55585c">DIREITA</text>
        <text x="1368" y="295" font-family="Roboto" font-size="10" font-weight="700" fill="#aeb3b8">O</text>
        <text x="1372" y="342" font-family="Roboto" font-size="11" font-weight="700" fill="#aeb3b8">S</text>
        <text x="1462" y="332" font-family="Roboto" font-size="10" font-weight="700" fill="#aeb3b8">L</text>
      </svg>

      <span class="absolute left-[3px] top-[9px] text-[#d8dce1]">[−][Vista personalizada][Raio X]</span>
      <div class="absolute right-[13px] top-[12px] flex items-center gap-[9px]">
        <span class="w-[10px] h-[2px] mt-[6px] bg-[#d8dce1]"></span>
        <svg width="10" height="10" viewBox="0 0 10 10" fill="none" stroke="#d8dce1" stroke-width="1.300"><path d="M3 2.500V.7h6.300v6.500H7"/><rect x=".7" y="2.700" width="6.300" height="6.600"/></svg>
        <svg width="9" height="9" viewBox="0 0 9 9" stroke="#e4e7ea" stroke-width="1.800"><path d="m0 0 9 9M9 0 0 9"/></svg>
      </div>
      <div class="absolute left-[1393px] top-[194px] flex items-center justify-center gap-[4px] w-[48px] h-[17px] rounded-[3px] bg-[#888e94] text-[11px] text-[#b6bbc1]">WCS<svg width="8" height="6" viewBox="0 0 8 6" fill="none" stroke="#b6bbc1"><path d="m1 1 3 4 3-4z"/></svg></div>

      <!-- command line -->
      <div class="absolute left-[306px] top-[741px] flex flex-col w-[887px] font-['Liberation_Mono',monospace] text-[11.700px]">
        <div class="flex flex-col gap-[5px] pl-[62px] text-[#c8cacc]">
          <span class="self-start flex items-center h-[15px] bg-[#4d5054] whitespace-pre">Nome do ucs atual:  *SEM NOME*</span>
          <span class="self-start flex items-center h-[15px] bg-[#4d5054] whitespace-pre">Especificar origem de UCS ou [Face/NOMeado/OBjeto/Anterior/Vista/Universal/X/Y/Z/eixOZ] &lt;Universal&gt;: U</span>
          <span class="self-start flex items-center h-[15px] bg-[#5b5e62] text-[#eceef0] whitespace-pre">Comando:</span>
        </div>
        <div class="flex h-[26px] mt-[3px]">
          <div class="flex items-center w-[56px] pl-[4px] gap-[6px] bg-[#2f3743]">
            <span class="w-[4px] h-[18px] bg-[repeating-linear-gradient(to_bottom,#c9ced6_0,#c9ced6_2px,transparent_2px,transparent_4px)]"></span>
            <svg width="10" height="11" viewBox="0 0 10 11" stroke="#c9ced6" stroke-width="1.400"><path d="m1 1 8 9M9 1l-8 9"/></svg>
            <svg class="ml-[4px]" width="13" height="14" viewBox="0 0 13 14"><path d="M7 7 12 0l-1 5 2 1-3 3-2 5H5z" fill="#d8dce1"/><path d="M5 8 0 14" stroke="#d8dce1" stroke-width="2"/></svg>
          </div>
          <div class="flex items-center flex-1 bg-[#bcbdbf] pl-[5px] pt-[1px] text-[#55585c]">
            <svg width="14" height="15" viewBox="0 0 14 15" fill="none"><rect x=".5" y=".5" width="13" height="14" stroke="#45484c" fill="#8e9093"/><path d="m3 5 3 3-3 3M7 12h4" stroke="#fff"/></svg>
            <svg class="ml-[2px]" width="8" height="8" viewBox="0 0 8 8"><path d="M0 2h8L4 7z" fill="#45484c"/></svg>
            <span class="ml-[5px] italic">Digite um comando</span>
            <svg class="ml-auto mr-[3px]" width="8" height="8" viewBox="0 0 8 8"><path d="M0 6h8L4 1z" fill="#5a5d61"/></svg>
          </div>
        </div>
      </div>
    </div>

    <!-- layer properties manager -->
    <aside class="flex flex-col w-[418px] h-[824px] mt-[1px] ml-[2px] bg-[#3b4453]">
      <div class="flex items-center h-[20px] pl-[7px] bg-[#2d3541] text-[#e2e6eb]">
        <span class="w-[3px] h-[11px] bg-[repeating-linear-gradient(to_bottom,#9aa3af_0,#9aa3af_1px,transparent_1px,transparent_2px)]"></span>
        <span class="ml-[5px] text-[12px]">GERENCIADOR DE PROPRIEDADES DE CAMADA</span>
      </div>
      <div class="flex items-center h-[32px] pl-[5px]">
        <span class="mt-[7px] text-[#e2e6eb]">Camada atual: HIPERBOLE</span>
        <span class="flex items-center ml-auto h-[15px] w-[97px] pl-[1px] bg-[#4a5568] text-[#a4abb6]">Pesquisar camada</span>
        <svg class="ml-[13px] mr-[2px]" width="13" height="13" viewBox="0 0 13 13" fill="none"><circle cx="5" cy="5" r="4" stroke="#d8dde3" stroke-width="1.200"/><path d="m8 8 5 5" stroke="#d8dde3" stroke-width="1.500"/></svg>
      </div>
      <div class="flex items-center h-[21px] pl-[3px] pb-[2px]">
        <svg width="17" height="14" viewBox="0 0 17 14"><path d="M1 1h5l1 2h7v8H1z" fill="#d6dbe2"/><path d="M8 8h8l-3 3v3h-2v-3z" fill="#8fc4ee"/></svg>
        <svg class="ml-[6px]" width="15" height="13" viewBox="0 0 15 13"><path d="M0 1h6l1 2h8v9H0z" fill="#d6dbe2"/></svg>
        <span class="ml-[7px] w-px h-[16px] bg-[#6a7381]"></span>
        <svg class="ml-[7px]" width="18" height="16" viewBox="0 0 18 16"><path d="M5 1h9l-3 4H2zM5 6h9l-3 4H2z" fill="#c5c9cf"/><rect x="8" y="5" width="8" height="11" fill="#e6e8ea"/><rect x="9" y="6" width="6" height="4" fill="#5aaee8"/></svg>
        <svg class="ml-[8px]" width="18" height="16" viewBox="0 0 20 20"><use href="#stack"/><use href="#sun" x="9" y="9" width="11" height="11"/></svg>
        <svg class="ml-[6px]" width="18" height="16" viewBox="0 0 20 20"><use href="#stack"/><path d="M14 9v10M9 11l10 6M9 17l10-6" stroke="#7cc0f0"/></svg>
        <svg class="ml-[6px]" width="18" height="16" viewBox="0 0 20 20"><use href="#stack"/><path d="m10 11 8 8M18 11l-8 8" stroke="#e5533d" stroke-width="2"/></svg>
        <svg class="ml-[6px]" width="18" height="16" viewBox="0 0 20 20"><use href="#stack"/><path d="m10 15 3 3 6-7" stroke="#5cc08a" stroke-width="2" fill="none"/></svg>
        <svg class="ml-auto" width="17" height="16" viewBox="0 0 17 16" fill="none" stroke="#52c08a" stroke-width="2.400"><path d="M15 6a6.500 6.500 0 0 0-12-1M2 10a6.500 6.500 0 0 0 12 1"/></svg>
        <svg class="ml-[6px]" width="14" height="14" viewBox="0 0 14 14"><path d="M1 1h9v9H1z" fill="#c5c9cf"/><path d="M14 8 9 13H3l3-3h4z" fill="#7b838f"/></svg>
        <svg class="ml-[8px] mr-[11px]" width="14" height="14" viewBox="0 0 14 14"><circle cx="7" cy="7" r="4" fill="none" stroke="#d8dce1" stroke-width="3"/><path d="M7 0v3M7 11v3M0 7h3M11 7h3M2 2l2 2M10 10l2 2M2 12l2-2M10 4l2-2" stroke="#d8dce1" stroke-width="2"/></svg>
      </div>
      <div class="flex flex-1 min-h-0">
        <div class="flex flex-col w-[25px] border-r border-[#2a313c]">
          <div class="flex items-center justify-center h-[23px] pl-[5px] bg-[#414b5b]"><svg width="11" height="9" viewBox="0 0 11 9" fill="none" stroke="#e6e9ed" stroke-width="1.800"><path d="m1 1 3.500 3.500L1 8M6 1l3.500 3.500L6 8"/></svg></div>
          <div class="flex items-center justify-center h-[23px] pl-[5px] mt-auto mb-[38px] bg-[#414b5b]"><svg width="11" height="9" viewBox="0 0 11 9" fill="none" stroke="#e6e9ed" stroke-width="1.800"><path d="m1 1 3.500 3.500L1 8M6 1l3.500 3.500L6 8"/></svg></div>
        </div>
        <div class="flex flex-col flex-1 min-w-0">
          <div class="flex flex-1 min-h-0">
            <div class="flex flex-col w-[209px] ml-[4px] border-r border-[#2a313c]">
              <div class="flex items-center h-[23px] bg-[#414b5b]">
                <span class="w-[18px] pl-[5px]">S..</span>
                <span class="ml-[4px]">Nome</span>
                <svg class="ml-auto mr-[2px]" width="7" height="6" viewBox="0 0 7 6"><path d="M0 5h7L3.500 1z" fill="#c9ced6"/></svg>
              </div>
              <div class="flex items-center h-[18px] pl-[2px]"><svg width="14" height="8"><use href="#plane"/></svg><span class="ml-[5px]">0</span></div>
              <div class="flex items-center h-[18px] pl-[2px]"><svg width="14" height="8"><use href="#plane"/></svg><span class="ml-[5px]">CIRCULO</span></div>
              <div class="flex items-center h-[18px] pl-[2px]"><svg width="14" height="8"><use href="#plane"/></svg><span class="ml-[5px]">CONES</span></div>
              <div class="flex items-center h-[18px] pl-[2px]"><svg width="14" height="8"><use href="#plane"/></svg><span class="ml-[5px]">ELIPSE</span></div>
              <div class="flex items-center h-[18px] pl-[2px] bg-[#6b7f9c] text-[#eef1f4]"><svg width="14" height="10" viewBox="0 0 14 10" fill="none" stroke="#62d08a" stroke-width="2"><path d="m2 5 3 3 7-7"/></svg><span class="ml-[5px]">HIPERBOLE</span></div>
              <div class="flex items-center h-[18px] pl-[2px]"><svg width="14" height="8"><use href="#plane"/></svg><span class="ml-[5px]">PARABOLA</span></div>
            </div>
            <div class="flex flex-col flex-1 min-w-0 ml-[2px] overflow-hidden">
              <div class="flex items-center h-[23px] bg-[#414b5b]">
                <span class="w-[18px] pl-[4px]">A.</span><span class="w-[18px] pl-[4px]">C.</span><span class="w-[18px] pl-[4px]">B..</span><span class="w-[17px] pl-[4px]">P..</span><span class="w-[73px] pl-[5px]">Cor</span><span>Tipo de</span>
              </div>
              <div class="flex items-center h-[18px] pl-[3px]"><svg class="shrink-0" width="11" height="13"><use href="#bulb"/></svg><svg class="ml-[6px] shrink-0" width="12" height="12"><use href="#sun"/></svg><svg class="ml-[6px] shrink-0" width="12" height="12"><use href="#lock"/></svg><svg class="ml-[7px] shrink-0" width="12" height="12"><use href="#printer"/></svg><span class="ml-[7px] shrink-0 w-[11px] h-[11px] border border-[#111] bg-white"></span><span class="ml-[5px] w-[55px] shrink-0">branco</span>Continua</div>
              <div class="flex items-center h-[18px] pl-[3px]"><svg class="shrink-0" width="11" height="13"><use href="#bulb"/></svg><svg class="ml-[6px] shrink-0" width="12" height="12"><use href="#sun"/></svg><svg class="ml-[6px] shrink-0" width="12" height="12"><use href="#lock"/></svg><svg class="ml-[7px] shrink-0" width="12" height="12"><use href="#printer"/></svg><span class="ml-[7px] shrink-0 w-[11px] h-[11px] border border-[#111] bg-[#ff0000]"></span><span class="ml-[5px] w-[55px] shrink-0">vermel...</span>Continua</div>
              <div class="flex items-center h-[18px] pl-[3px]"><svg class="shrink-0" width="11" height="13"><use href="#bulb"/></svg><svg class="ml-[6px] shrink-0" width="12" height="12"><use href="#sun"/></svg><svg class="ml-[6px] shrink-0" width="12" height="12"><use href="#lock"/></svg><svg class="ml-[7px] shrink-0" width="12" height="12"><use href="#printer"/></svg><span class="ml-[7px] shrink-0 w-[11px] h-[11px] border border-[#111] bg-white"></span><span class="ml-[5px] w-[55px] shrink-0">branco</span>Continua</div>
              <div class="flex items-center h-[18px] pl-[3px]"><svg class="shrink-0" width="11" height="13"><use href="#bulb"/></svg><svg class="ml-[6px] shrink-0" width="12" height="12"><use href="#sun"/></svg><svg class="ml-[6px] shrink-0" width="12" height="12"><use href="#lock"/></svg><svg class="ml-[7px] shrink-0" width="12" height="12"><use href="#printer"/></svg><span class="ml-[7px] shrink-0 w-[11px] h-[11px] border border-[#111] bg-[#ffff00]"></span><span class="ml-[5px] w-[55px] shrink-0">amarelo</span>Continua</div>
              <div class="flex items-center h-[18px] pl-[3px] bg-[#6b7f9c] text-[#eef1f4]"><svg class="shrink-0" width="11" height="13"><use href="#bulb"/></svg><svg class="ml-[6px] shrink-0" width="12" height="12"><use href="#sun"/></svg><svg class="ml-[6px] shrink-0" width="12" height="12"><use href="#lock"/></svg><svg class="ml-[7px] shrink-0" width="12" height="12"><use href="#printer"/></svg><span class="ml-[7px] shrink-0 w-[11px] h-[11px] border border-[#111] bg-[#00ffff]"></span><span class="ml-[5px] w-[55px] shrink-0">ciano</span>Continua</div>
              <div class="flex items-center h-[18px] pl-[3px]"><svg class="shrink-0" width="11" height="13"><use href="#bulb"/></svg><svg class="ml-[6px] shrink-0" width="12" height="12"><use href="#sun"/></svg><svg class="ml-[6px] shrink-0" width="12" height="12"><use href="#lock"/></svg><svg class="ml-[7px] shrink-0" width="12" height="12"><use href="#printer"/></svg><span class="ml-[7px] shrink-0 w-[11px] h-[11px] border border-[#111] bg-[#00ff00]"></span><span class="ml-[5px] w-[55px] shrink-0">verde</span>Continua</div>
            </div>
          </div>
          <div class="flex items-center h-[19px] mb-[38px] ml-[4px] pl-[17px] bg-[#f3f3f3]"><span class="w-[110px] h-[2px] bg-[#777]"></span></div>
        </div>
      </div>
      <div class="absolute left-[1504px] top-[975px] flex items-center h-[24px]">
        <svg width="17" height="15" viewBox="0 0 17 15"><path d="M1 1h6l1 2h7v9H1z" fill="#d6dbe2"/><path d="m10 6-3 5h3l-1 4 5-6h-3l2-3z" fill="#f1c04c"/></svg>
        <svg class="ml-[3px]" width="8" height="8"><use href="#chev"/></svg>
        <span class="ml-[5px]">Todos: 6 camadas exibidas de 6 camadas totais</span>
      </div>
    </aside>
  </main>

  <!-- status bar -->
  <footer class="flex items-stretch h-[29px] shrink-0 bg-[#222933] border-t border-[#3d4552]">
    <div class="flex items-start pl-[11px] h-[17px] gap-[4px] text-[#b0b7c1]">
      <span class="flex items-center justify-center w-16 h-[17px] rounded-b-[5px] bg-[#3b4453] text-[#f2f4f7] font-bold tracking-[-0.3px]">Modelo</span>
      <span class="flex items-center justify-center w-[61px] h-[17px] rounded-b-[5px] bg-[#2d3541]">Layout1</span>
      <span class="flex items-center justify-center w-[63px] h-[17px] rounded-b-[5px] bg-[#2d3541]">Layout2</span>
      <span class="flex items-center justify-center w-[22px] h-[17px] rounded-b-[5px] bg-[#2d3541]"><svg width="9" height="9" viewBox="0 0 9 9" stroke="#aeb5be" stroke-width="1.600"><path d="M4.500 0v9M0 4.500h9"/></svg></span>
    </div>
    <div class="flex items-center ml-auto gap-[2px] h-[24px] mt-[1px]">
      <span class="flex items-center justify-center w-[56px] h-full bg-[#3b4453] text-[#e8ebef] text-[13px]">MODELO</span>
      <div class="flex items-center w-[65px] h-full bg-[#3b4453] pl-[2px]">
        <span class="flex items-center justify-center w-[22px] h-full bg-[#5b90c9]"><svg width="16" height="16" viewBox="0 0 16 16" stroke="#fff"><path d="M5 0v16M11 0v16M0 5h16M0 11h16"/></svg></span>
        <svg class="ml-[5px]" width="14" height="14" viewBox="0 0 14 14" fill="#cfd4da"><path d="M2 2h1.500v1.500H2zM6 2h1.500v1.500H6zM10 2h1.500v1.500H10zM2 6h1.500v1.500H2zM6 6h1.500v1.500H6zM10 6h1.500v1.500H10zM2 10h1.500v1.500H2zM6 10h1.500v1.500H6zM10 10h1.500v1.500H10z"/></svg>
        <svg class="ml-[7px]" width="8" height="8"><use href="#chev"/></svg>
      </div>
      <div class="flex items-center w-[195px] h-full bg-[#3b4453] pl-[2px]">
        <span class="flex items-center justify-center w-[22px] h-full bg-[#5b90c9]"><svg width="17" height="17" viewBox="0 0 17 17"><path d="M3 2v5M1 4.500h5" stroke="#fff"/><rect x="7" y="10" width="10" height="5" fill="#fff"/></svg></span>
        <svg class="ml-[5px]" width="16" height="16" viewBox="0 0 16 16" fill="none" stroke="#cfd4da"><path d="M1 0v15h15M1 9h6v6"/></svg>
        <svg class="ml-[7px]" width="18" height="16" viewBox="0 0 18 16" fill="none" stroke="#cfd4da"><circle cx="8" cy="9" r="6"/><path d="m8 9 8-7M8 9h9"/></svg>
        <svg class="ml-[6px]" width="8" height="8"><use href="#chev"/></svg>
        <svg class="ml-[12px]" width="14" height="18" viewBox="0 0 14 18" fill="none"><path d="M1 0l6 9 6 9" stroke="#e06a6a"/><path d="M8 0 6 9v9" stroke="#5fb36a"/><rect x="5" y="7" width="4" height="4" stroke="#cfd4da"/></svg>
        <svg class="ml-[7px]" width="8" height="8"><use href="#chev"/></svg>
        <span class="flex items-center justify-center ml-[6px] w-[22px] h-full bg-[#5b90c9]"><svg width="16" height="14" viewBox="0 0 16 14" fill="none" stroke="#fff" stroke-width="1.200"><path d="M16 1 1 13h15"/></svg></span>
        <span class="flex items-center justify-center ml-[2px] w-[22px] h-full bg-[#5b90c9]"><svg width="18" height="18" viewBox="0 0 18 18" fill="none" stroke="#fff"><rect x="1" y="1" width="5" height="5"/><path d="M7 3h9v14H2V8"/></svg></span>
        <svg class="ml-[4px]" width="8" height="8"><use href="#chev"/></svg>
      </div>
      <div class="flex items-center w-[107px] h-full bg-[#3b4453] pl-[1px]">
        <span class="flex items-center justify-center w-[22px] h-full bg-[#5b90c9]"><svg width="17" height="17" viewBox="0 0 17 17"><path d="M1 17 6 1l2 8 4 8H9L6 10l-2 7z" fill="#fff"/><circle cx="12" cy="4" r="2.500" fill="none" stroke="#fff"/></svg></span>
        <svg class="ml-[4px]" width="17" height="17" viewBox="0 0 17 17"><path d="M1 17 6 1l2 8 4 8H9L6 10l-2 7z" fill="#cfd4da"/><path d="m11 2 2 3 2-1-1 4" stroke="#cfd4da" fill="none"/></svg>
        <svg class="ml-[6px]" width="15" height="16" viewBox="0 0 15 16"><path d="M1 16 7.500 0 14 16h-4L7.500 10 5 16z" fill="#cfd4da"/></svg>
        <span class="ml-[8px] text-[#e2e6eb] font-bold tracking-[-0.6px]">1:1</span>
        <svg class="ml-[3px]" width="8" height="8"><use href="#chev"/></svg>
      </div>
      <div class="flex items-center w-10 h-full bg-[#3b4453] pl-[3px]">
        <svg width="17" height="17" viewBox="0 0 17 17"><circle cx="8.500" cy="8.500" r="4.500" fill="none" stroke="#e0e3e7" stroke-width="3"/><path d="M8.500 0v3M8.500 14v3M0 8.500h3M14 8.500h3M2.500 2.500l2 2M12.500 12.500l2 2M2.500 14.500l2-2M12.500 4.500l2-2" stroke="#e0e3e7" stroke-width="2.200"/></svg>
        <svg class="ml-[6px]" width="8" height="8"><use href="#chev"/></svg>
      </div>
      <div class="flex items-center justify-center w-[24px] h-full bg-[#3b4453]"><svg width="17" height="17" viewBox="0 0 17 17" stroke="#e6e9ed" stroke-width="1.500"><path d="M8.500 0v17M0 8.500h17"/></svg></div>
      <div class="flex items-center justify-center w-[25px] h-full bg-[#3b4453]"><svg width="18" height="18" viewBox="0 0 18 18" fill="none" stroke="#cfd4da"><rect x="2" y="1" width="6" height="6"/><circle cx="14" cy="7" r="3"/><path d="m4 17 4-6 4 6z"/></svg></div>
      <div class="flex items-center justify-center gap-[5px] w-[50px] h-full bg-[#3b4453]"><svg width="18" height="18" viewBox="0 0 18 18"><path d="M1 3h16v8H1z" fill="#6fa7dd"/><rect x="3" y="10" width="7" height="7" fill="#e6b64e"/><path d="m8 13 3 4 6-8" stroke="#5cc08a" stroke-width="2" fill="none"/></svg><svg width="18" height="18" viewBox="0 0 18 18"><rect width="18" height="14" y="1" fill="#6c737e"/><path d="M1 12 6 4l5 8 4-4" stroke="#d6dbe2" fill="none"/><path d="m14 6 4 12h-8z" fill="#e8964a"/></svg></div>
      <div class="flex items-center w-[51px] h-full pl-[5px] bg-[#3b4453]"><svg width="17" height="15" viewBox="0 0 17 15" fill="none" stroke="#cfd4da"><rect x=".5" y=".5" width="16" height="14"/><path d="M4 11l3-3M4 11h3M4 11V8M13 4l-3 3M13 4h-3M13 4v3"/></svg><svg class="ml-[7px]" width="18" height="15" viewBox="0 0 18 15" fill="#e2e6eb"><path d="M0 0h18v2H0zM0 6h18v2H0zM0 12h18v2H0z"/></svg></div>
    </div>
  </footer>

  <!-- windows taskbar -->
  <div class="relative flex items-center flex-1 bg-[#e3e0dc] text-[#1d1d1d] text-[11px]">
    <span class="ml-[22px] w-[21px] h-[21px] rounded-full bg-[radial-gradient(circle_at_60%_30%,#ffb13b,#ee7412)]"></span>
    <div class="flex flex-col ml-[8px] gap-[6px] text-[#3a3a3a]"><span>17°C</span><span class="text-[#666]">Sol</span></div>
    <div class="absolute left-[694px] top-0 flex items-center h-full">
      <svg width="23" height="23" viewBox="0 0 23 23"><path d="M0 0h11v11H0z" fill="#2a9fdd"/><path d="M12 0h11v11H12z" fill="#43b4ea"/><path d="M0 12h11v11H0z" fill="#1b85cb"/><path d="M12 12h11v11H12z" fill="#2a9fdd"/></svg>
      <div class="flex items-center justify-center gap-[3px] ml-[16px] w-[106px] h-[30px] rounded-full bg-[#f6f4f1] text-[12px]"><svg width="13" height="13" viewBox="0 0 13 13" fill="none" stroke="#222" stroke-width="1.200"><circle cx="8" cy="5" r="4"/><path d="m5 8-4 4"/></svg>Procurar</div>
      <div class="flex items-center justify-center ml-[13px] w-[23px] h-[23px]"><svg width="20" height="20" viewBox="0 0 20 20"><rect x="8" y="0" width="12" height="14" fill="#f4f4f4"/><rect x="2" y="6" width="13" height="14" fill="#1c1c1c"/><rect x="8" y="6" width="7" height="8" fill="#9a9a9a"/></svg></div>
      <div class="flex items-center justify-center ml-[21px] w-[23px] h-[23px]"><svg width="22" height="24" viewBox="0 0 22 24"><ellipse cx="11" cy="11" rx="10" ry="11" fill="#6264c8"/><path d="M8 23 6 19h6z" fill="#6264c8"/><rect x="6" y="7" width="8" height="8" rx="1.500" fill="#fff"/><path d="m14 10 3-2v6l-3-2z" fill="#fff"/></svg></div>
      <div class="flex items-center justify-center ml-[21px] w-[23px] h-[23px]"><svg width="22" height="24" viewBox="0 0 22 24"><path d="M2 6h18v17a1 1 0 0 1-1 1H3a1 1 0 0 1-1-1z" fill="#0d5c9c"/><path d="M7 6V3a4 4 0 0 1 8 0v3" stroke="#2e9bd8" stroke-width="2" fill="none"/><path d="M7 10h4v4H7z" fill="#f25022"/><path d="M12 10h4v4h-4z" fill="#7fba00"/><path d="M7 15h4v4H7z" fill="#00a4ef"/><path d="M12 15h4v4h-4z" fill="#ffb900"/></svg></div>
      <div class="flex items-center justify-center ml-[21px] w-[23px] h-[23px]"><svg width="22" height="24" viewBox="0 0 22 24"><path d="M2 2h20v22H2z" fill="#1a1a1a"/><path d="M7 19V6l8 13V6" stroke="#8c8c8c" stroke-width="2" fill="none"/></svg></div>
      <div class="flex items-center justify-center ml-[21px] w-[23px] h-[23px]"><svg width="24" height="24" viewBox="0 0 24 24"><path d="M1 1h9l2 3H1z" fill="#d69a1e"/><path d="M1 4h22v19H1z" fill="#f9cf4a"/><rect x="7" y="16" width="11" height="7" fill="#2b8fd8"/></svg></div>
      <div class="flex items-center justify-center ml-[21px] w-[23px] h-[23px]"><svg width="24" height="24" viewBox="0 0 24 24" fill="none"><circle cx="12" cy="12" r="11" fill="#1ed760"/><path d="M6 9c4-1 9-1 12 1M7 12.500c3-1 8-1 10 1M8 16c3-.7 6-.5 8 .7" stroke="#1a1a1a" stroke-width="2" stroke-linecap="round"/></svg></div>
      <div class="flex items-center justify-center ml-[21px] w-[23px] h-[23px]"><svg width="24" height="24" viewBox="0 0 24 24"><circle cx="12" cy="12" r="12" fill="#5865f2"/><path d="M6 8c4-2 8-2 12 0l2 8c-2 1.500-3 2-4 2l-1-2c-2 .5-4 .5-6 0l-1 2c-1 0-2-.5-4-2z" fill="#fff"/><circle cx="9.500" cy="12.500" r="1.500" fill="#5865f2"/><circle cx="14.500" cy="12.500" r="1.500" fill="#5865f2"/></svg></div>
      <div class="relative flex items-center justify-center ml-[21px] w-[23px] h-[23px]"><svg width="24" height="24" viewBox="0 0 24 24"><circle cx="12" cy="12" r="12" fill="#e04a3a"/><path d="M12 12 2 18a12 12 0 0 0 12 6z" fill="#3aa757"/><path d="M12 12l10-6a12 12 0 0 1-8 18z" fill="#fbc02d"/><circle cx="12" cy="12" r="5.500" fill="#fff"/><circle cx="12" cy="12" r="4.200" fill="#4a8df5"/></svg><span class="absolute -bottom-[8px] w-[4px] h-[4px] rounded-full bg-[#7a7a7a]"></span></div>
      <div class="relative flex items-center justify-center ml-[10px] w-[46px] h-[41px] rounded-[4px] bg-[#efece8]"><span class="flex items-center justify-center w-[24px] h-[26px] bg-[#f8e4de]"><svg width="20" height="24" viewBox="0 0 20 24"><path d="M0 24 7 0h6l7 24h-5l-1.500-6h-7L5 24zM7.500 14h5L10 5z" fill="#c3242b"/></svg></span><span class="absolute bottom-[2px] w-[15px] h-[3px] rounded-full bg-[#2a7d8a]"></span></div>
    </div>
    <div class="flex items-center ml-auto text-[12px]">
      <svg width="12" height="8" viewBox="0 0 12 8" fill="none" stroke="#222" stroke-width="1.300"><path d="m1 7 5-6 5 6"/></svg>
      <svg class="ml-[10px]" width="17" height="18" viewBox="0 0 17 18"><circle cx="8" cy="9" r="8" fill="#53c04a"/><path d="m4 3 8 9M10 3 5 11" stroke="#1d4d1a" stroke-width="2"/><path d="M10 15a3 3 0 0 1 6 0v2h-6z" fill="#f0b820"/></svg>
      <span class="ml-[14px] text-[#2b2b2b]">POR</span>
      <svg class="ml-[19px]" width="16" height="14" viewBox="0 0 16 14" fill="none" stroke="#222" stroke-width="1.200"><path d="M1 5c4-4 10-4 14 0M3.500 8c2.500-2.500 6.500-2.500 9 0M6 10.500c1-1 3-1 4 0"/><circle cx="8" cy="12.500" r=".8" fill="#222"/></svg>
      <svg class="ml-[10px]" width="15" height="13" viewBox="0 0 15 13" fill="none" stroke="#222"><path d="M1 4.500v4h2.500L7 12V1L3.500 4.500zM10 4.500l4 4M14 4.500l-4 4"/></svg>
      <svg class="ml-[7px]" width="16" height="14" viewBox="0 0 16 14"><path d="M1 5h2V2h2v3h1V2h2v3h1l-2 6H3z" fill="#222"/><rect x="7" y="3" width="8" height="9" rx="1" fill="#222"/><rect x="9" y="5" width="4" height="5" fill="#e3e0dc"/></svg>
      <div class="flex flex-col items-end gap-[6px] ml-[15px] pt-[2px] text-[#1d1d1d]"><span>11:15</span><span>16/03/2023</span></div>
      <span class="flex items-center justify-center ml-[8px] mr-[20px] w-4 h-4 rounded-full bg-[#1f8595] text-white text-[11px]">1</span>
    </div>
  </div>
</div>
</body>
</html>
